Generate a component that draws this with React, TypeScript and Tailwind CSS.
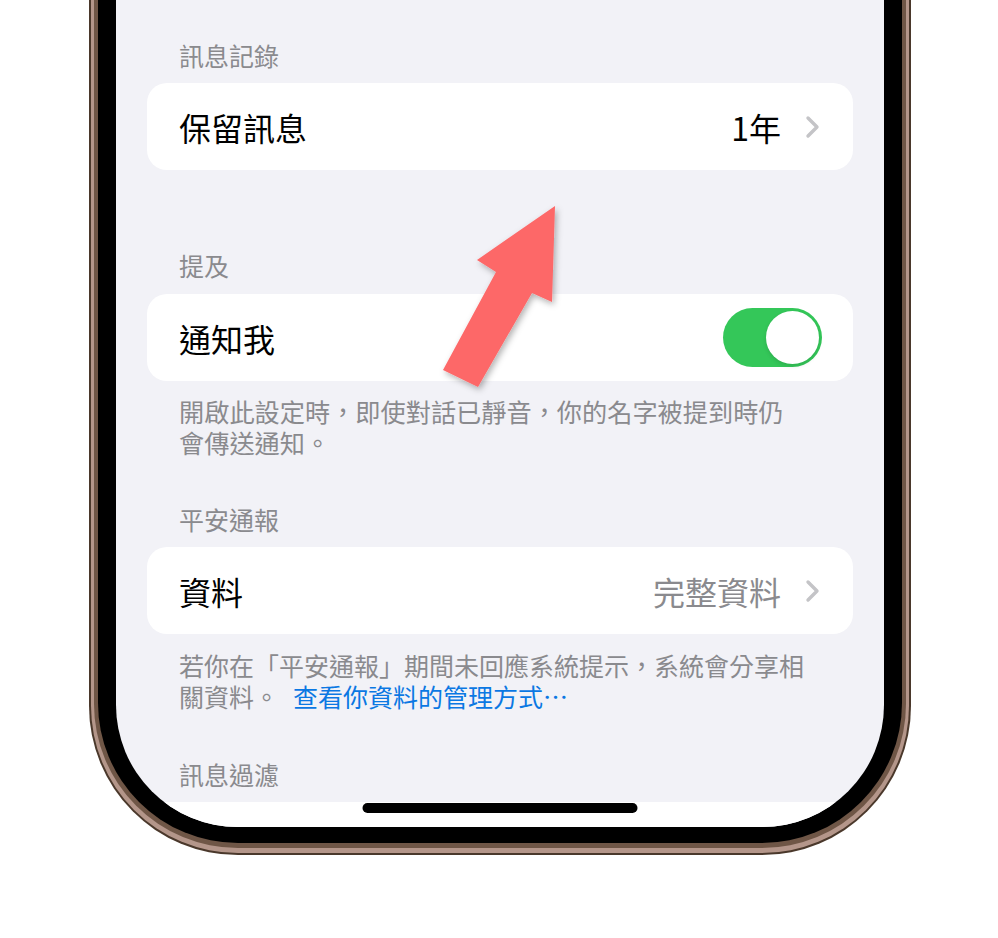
const font = "font-['Noto_Sans_CJK_TC','Noto_Sans',sans-serif]";

function Chevron() {
    return (
        <svg width="16" height="24" viewBox="0 0 16 24" className="ml-[24px] shrink-0">
            <polyline
                points="3,3 12,12 3,21"
                fill="none"
                stroke="#c4c4c7"
                strokeWidth="3.4"
                strokeLinecap="round"
                strokeLinejoin="round"
            />
        </svg>
    );
}

function SectionHeader({ title, className }: { title: string; className?: string }) {
    return (
        <div className={`h-[32px] pl-[32px] text-[25px] leading-[32px] text-[#8a8a8e] ${className ?? ""}`}>
            {title}
        </div>
    );
}

function Toggle() {
    return (
        <div className="flex h-[59px] w-[99px] items-center justify-end rounded-full bg-[#34c759] p-[3px]">
            <div className="h-[53px] w-[53px] rounded-full bg-white shadow-[0_2px_4px_rgba(0,0,0,0.12)]" />
        </div>
    );
}

export default function App() {
    return (
        <div className={`relative h-[938px] w-[998px] overflow-hidden bg-white ${font}`}>
            {/* phone frame */}
            <div className="ml-[89px] w-[822px] rounded-b-[149px] bg-[#4a382b] px-[2px] pb-[2px]">
                <div className="rounded-b-[147px] bg-[#b4968a] px-[3px] pb-[5px]">
                    <div className="rounded-b-[144px] bg-[#6f5646] px-[4px] pb-[5px]">
                        <div className="rounded-b-[140px] bg-black px-[18px] pb-[16px]">
                            <div className="relative h-[827px] overflow-hidden rounded-b-[122px] bg-[#f2f2f7] px-[31px] pt-[39px]">
                                <SectionHeader title="訊息記錄" className="mb-[12px]" />
                                <div className="flex h-[87px] items-center rounded-[20px] bg-white px-[32px]">
                                    <span className="flex-1 text-[32px] text-black">保留訊息</span>
                                    <span className="text-[32px] text-black">1年</span>
                                    <Chevron />
                                </div>

                                <SectionHeader title="提及" className="mt-[79px] mb-[13px]" />
                                <div className="flex h-[87px] items-center rounded-[20px] bg-white pl-[32px] pr-[31px]">
                                    <span className="flex-1 text-[32px] text-black">通知我</span>
                                    <Toggle />
                                </div>
                                <p className="mt-[15px] whitespace-nowrap pl-[32px] text-[25.2px] leading-[31px] text-[#8a8a8e]">
                                    開啟此設定時，即使對話已靜音，你的名字被提到時仍
                                    <br />
                                    會傳送通知。
                                </p>

                                <SectionHeader title="平安通報" className="mt-[45px] mb-[12px]" />
                                <div className="flex h-[87px] items-center rounded-[20px] bg-white px-[32px]">
                                    <span className="flex-1 text-[32px] text-black">資料</span>
                                    <span className="text-[32px] text-[#8a8a8e]">完整資料</span>
                                    <Chevron />
                                </div>
                                <p className="mt-[16px] whitespace-nowrap pl-[32px] text-[25px] leading-[31px] text-[#8a8a8e]">
                                    若你在「平安通報」期間未回應系統提示，系統會分享相
                                    <br />
                                    關資料。
                                    <span className="ml-[14px] text-[#0b78e3]">查看你資料的管理方式⋯</span>
                                </p>

                                <SectionHeader title="訊息過濾" className="mt-[46px] mb-[12px]" />
                                <div className="h-[100px] rounded-t-[20px] bg-white" />

                                {/* home indicator */}
                                <div className="absolute bottom-[14px] left-1/2 h-[10px] w-[275px] -translate-x-1/2 rounded-full bg-black" />
                            </div>
                        </div>
                    </div>
                </div>
            </div>

            {/* annotation arrow */}
            <svg
                className="pointer-events-none absolute left-0 top-0"
                width="998"
                height="938"
                viewBox="0 0 998 938"
            >
                <defs>
                    <filter id="arrowShadow" x="-20%" y="-20%" width="140%" height="140%">
                        <feDropShadow dx="2" dy="3" stdDeviation="3" floodColor="#000" floodOpacity="0.3" />
                    </filter>
                </defs>
                <polygon
                    points="555,206 552,302 532,293 478,387 443,370 496,272 477,260"
                    fill="#fd6868"
                    filter="url(#arrowShadow)"
                />
            </svg>
        </div>
    );
}
